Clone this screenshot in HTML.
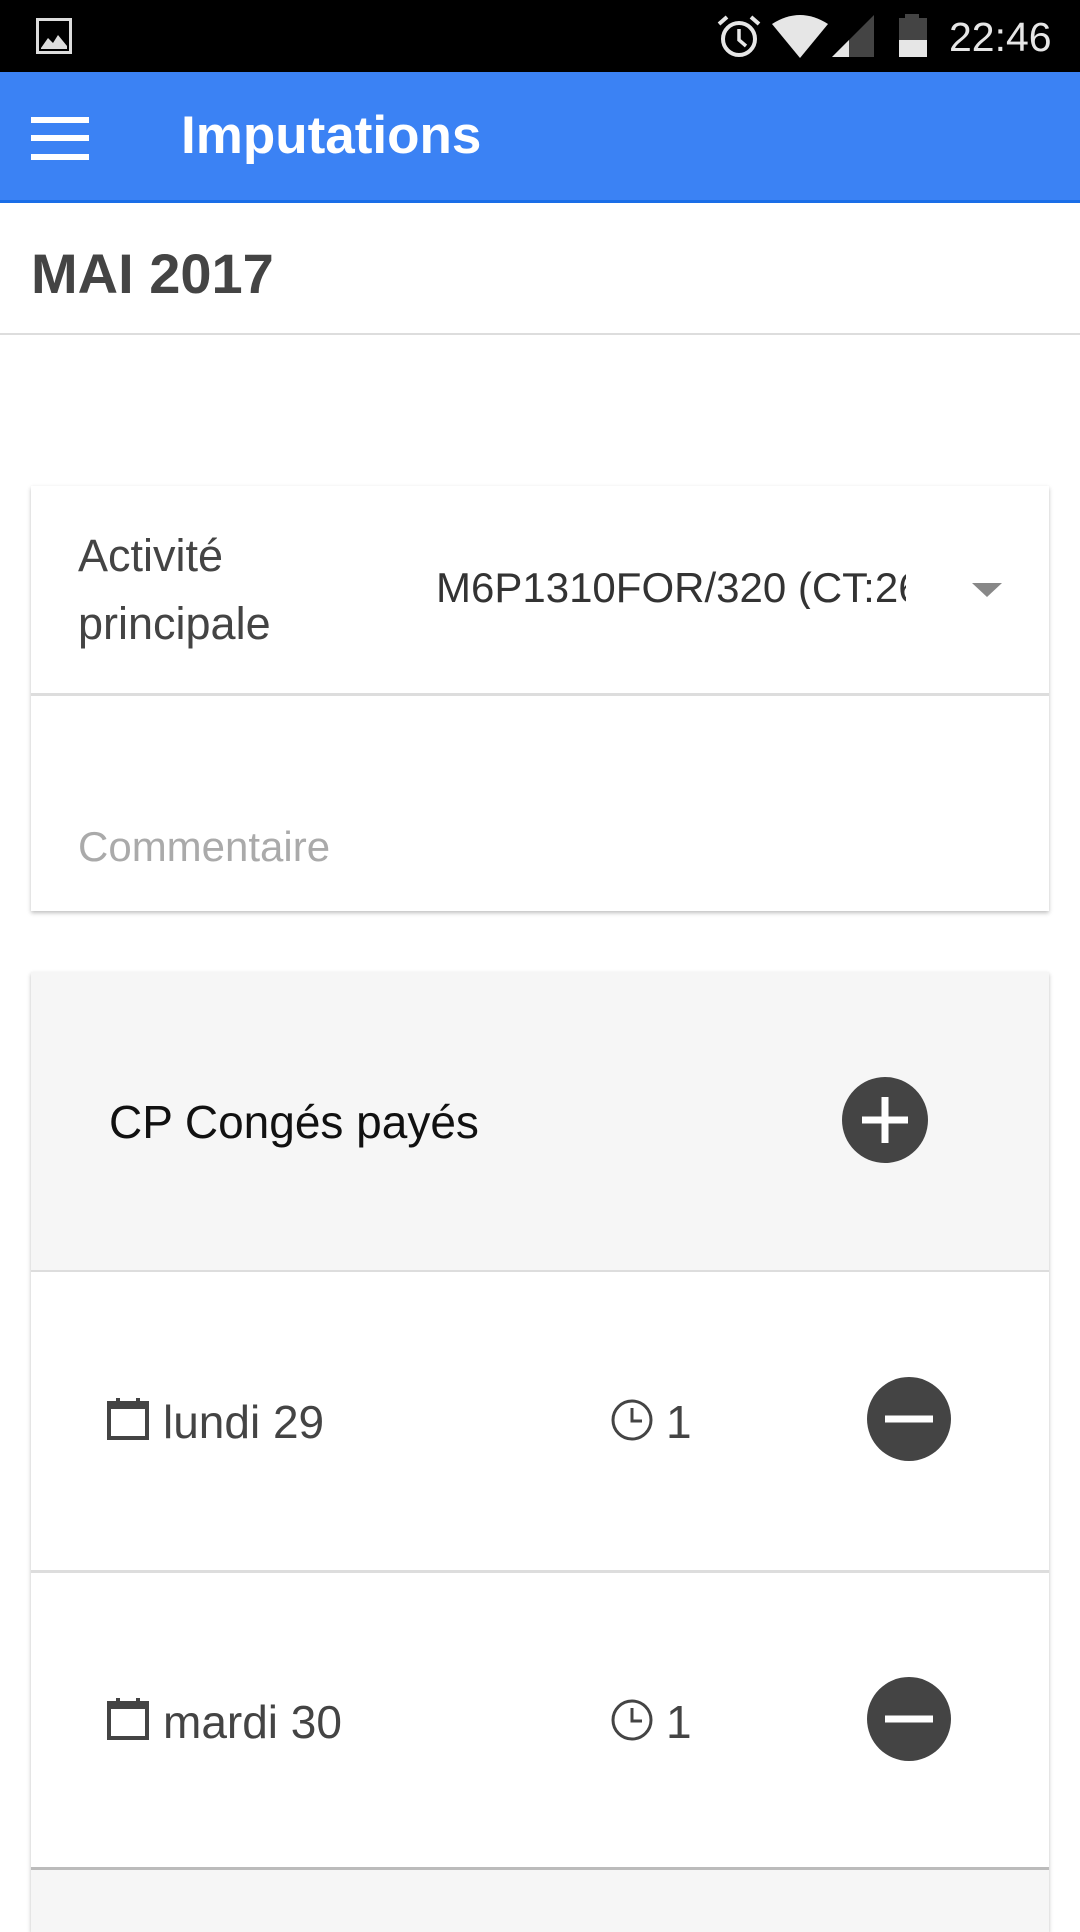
<!DOCTYPE html>
<html><head><meta charset="utf-8"><style>
*{margin:0;padding:0;box-sizing:border-box}
body{width:1080px;height:1920px;background:#fff;font-family:"Liberation Sans",sans-serif;position:relative;overflow:hidden}
.a{position:absolute}
.sb{left:0;top:0;width:1080px;height:72px;background:#000}
.ab{left:0;top:72px;width:1080px;height:131px;background:#3b82f4;border-bottom:3px solid #1a6ee8}
.hl{left:31px;width:58px;height:6px;background:#fff}
.card{box-shadow:0 2px 4px rgba(0,0,0,.25);background:#fff}
.t{white-space:nowrap;line-height:1}
</style></head><body>
<div class="a sb">
<svg class="a" style="left:36px;top:18px" width="36" height="36" viewBox="0 0 36 36"><rect x="1.5" y="1.5" width="33" height="33" fill="none" stroke="#ddd" stroke-width="3"/><path d="M5 30 L12 20 L17 25 L22 17 L31 28 L31 31 L5 31Z" fill="#ddd"/></svg>
<svg class="a" style="left:716px;top:14px" width="46" height="46" viewBox="0 0 46 46"><circle cx="23" cy="25" r="16" fill="none" stroke="#e6e6e6" stroke-width="4"/><path d="M23 15 V26 L30 32" fill="none" stroke="#e6e6e6" stroke-width="3.5"/><path d="M3 10 L11 3 M43 10 L35 3" stroke="#e6e6e6" stroke-width="4"/></svg>
<svg class="a" style="left:772px;top:14px" width="56" height="44" viewBox="0 0 56 44"><path d="M0 10 Q28 -8 56 10 L28 44Z" fill="#e6e6e6"/></svg>
<svg class="a" style="left:832px;top:15px" width="42" height="42" viewBox="0 0 42 42"><path d="M0 42 L42 0 L42 42Z" fill="#444"/><path d="M0 42 L17 25 L17 42Z" fill="#e6e6e6"/></svg>
<div class="a" style="left:905px;top:14px;width:14px;height:4px;background:#444"></div>
<div class="a" style="left:899px;top:18px;width:28px;height:22px;background:#444"></div>
<div class="a" style="left:899px;top:40px;width:28px;height:17px;background:#e6e6e6"></div>
<div class="a t" style="left:949px;top:17px;font-size:41px;color:#e6e6e6">22:46</div>
</div>
<div class="a ab">
<div class="a hl" style="top:45px"></div><div class="a hl" style="top:63px"></div><div class="a hl" style="top:82px"></div>
<div class="a t" style="left:181px;top:37px;font-size:53px;font-weight:bold;color:#fff">Imputations</div>
</div>
<div class="a t" style="left:31px;top:246px;font-size:56px;font-weight:bold;color:#444">MAI 2017</div>
<div class="a" style="left:0;top:333px;width:1080px;height:2px;background:#ddd"></div>

<div class="a card" style="left:31px;top:486px;width:1018px;height:425px"></div>
<div class="a t" style="left:78px;top:522px;font-size:45px;color:#444;line-height:68px">Activité<br>principale</div>
<div class="a t" style="left:436px;top:567px;width:470px;overflow:hidden;font-size:42px;color:#333">M6P1310FOR/320 (CT:26)</div>
<svg class="a" style="left:972px;top:583px" width="30" height="14"><path d="M0 0 H30 L15 14Z" fill="#888"/></svg>
<div class="a" style="left:31px;top:693px;width:1018px;height:3px;background:#ddd"></div>
<div class="a t" style="left:78px;top:826px;font-size:42px;color:#aaa">Commentaire</div>

<div class="a card" style="left:31px;top:972px;width:1018px;height:960px;background:#f6f6f6"></div>
<div class="a t" style="left:109px;top:1099px;font-size:46px;color:#111">CP Congés payés</div>
<svg class="a" style="left:842px;top:1077px" width="86" height="86" viewBox="0 0 86 86"><circle cx="43" cy="43" r="43" fill="#444"/><path d="M43 20 V66 M20 43 H66" stroke="#fff" stroke-width="7"/></svg>

<div class="a" style="left:31px;top:1270px;width:1018px;height:300px;background:#fff;border-top:2px solid #ddd"></div>
<div class="a" style="left:31px;top:1570px;width:1018px;height:300px;background:#fff;border-top:3px solid #ddd;border-bottom:3px solid #bbb"></div>

<svg class="a" style="left:107px;top:1398px" width="42" height="42" viewBox="0 0 42 42"><rect x="2" y="5" width="38" height="35" fill="none" stroke="#444" stroke-width="4"/><rect x="2" y="5" width="38" height="6" fill="#444"/><rect x="9" y="0" width="4" height="9" fill="#444"/><rect x="29" y="0" width="4" height="9" fill="#444"/></svg>
<div class="a t" style="left:163px;top:1399px;font-size:46px;color:#444">lundi 29</div>
<svg class="a" style="left:610px;top:1398px" width="44" height="44" viewBox="0 0 44 44"><circle cx="22" cy="22" r="19" fill="none" stroke="#444" stroke-width="3"/><path d="M22 10 V23 H32" fill="none" stroke="#444" stroke-width="3"/></svg>
<div class="a t" style="left:666px;top:1399px;font-size:46px;color:#444">1</div>
<svg class="a" style="left:867px;top:1377px" width="84" height="84" viewBox="0 0 84 84"><circle cx="42" cy="42" r="42" fill="#444"/><path d="M18 42 H66" stroke="#fff" stroke-width="7"/></svg>

<svg class="a" style="left:107px;top:1698px" width="42" height="42" viewBox="0 0 42 42"><rect x="2" y="5" width="38" height="35" fill="none" stroke="#444" stroke-width="4"/><rect x="2" y="5" width="38" height="6" fill="#444"/><rect x="9" y="0" width="4" height="9" fill="#444"/><rect x="29" y="0" width="4" height="9" fill="#444"/></svg>
<div class="a t" style="left:163px;top:1699px;font-size:46px;color:#444">mardi 30</div>
<svg class="a" style="left:610px;top:1698px" width="44" height="44" viewBox="0 0 44 44"><circle cx="22" cy="22" r="19" fill="none" stroke="#444" stroke-width="3"/><path d="M22 10 V23 H32" fill="none" stroke="#444" stroke-width="3"/></svg>
<div class="a t" style="left:666px;top:1699px;font-size:46px;color:#444">1</div>
<svg class="a" style="left:867px;top:1677px" width="84" height="84" viewBox="0 0 84 84"><circle cx="42" cy="42" r="42" fill="#444"/><path d="M18 42 H66" stroke="#fff" stroke-width="7"/></svg>
</body></html>
